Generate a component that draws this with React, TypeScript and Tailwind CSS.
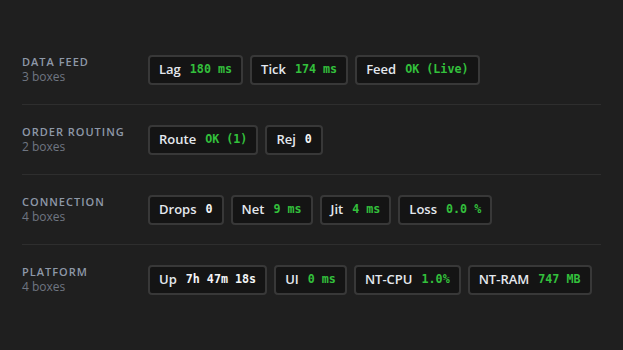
import React from 'react';

type Tone = 'green' | 'white';

interface Metric {
  label: string;
  value: string;
  tone: Tone;
}

interface Group {
  title: string;
  metrics: Metric[];
}

const GROUPS: Group[] = [
  {
    title: 'Data Feed',
    metrics: [
      { label: 'Lag', value: '180 ms', tone: 'green' },
      { label: 'Tick', value: '174 ms', tone: 'green' },
      { label: 'Feed', value: 'OK (Live)', tone: 'green' },
    ],
  },
  {
    title: 'Order Routing',
    metrics: [
      { label: 'Route', value: 'OK (1)', tone: 'green' },
      { label: 'Rej', value: '0', tone: 'white' },
    ],
  },
  {
    title: 'Connection',
    metrics: [
      { label: 'Drops', value: '0', tone: 'white' },
      { label: 'Net', value: '9 ms', tone: 'green' },
      { label: 'Jit', value: '4 ms', tone: 'green' },
      { label: 'Loss', value: '0.0 %', tone: 'green' },
    ],
  },
  {
    title: 'Platform',
    metrics: [
      { label: 'Up', value: '7h 47m 18s', tone: 'white' },
      { label: 'UI', value: '0 ms', tone: 'green' },
      { label: 'NT-CPU', value: '1.0%', tone: 'green' },
      { label: 'NT-RAM', value: '747 MB', tone: 'green' },
    ],
  },
];

const MetricBox: React.FC<{ metric: Metric }> = ({ metric }) => (
  <div className="flex h-[30px] items-center gap-[9px] whitespace-nowrap rounded-[4px] border-2 border-[#383838] bg-[#141414] px-[9px]">
    <span className="text-[13px] font-semibold text-[#e4e8ee]">{metric.label}</span>
    <span
      className={
        'font-["DejaVu_Sans_Mono",monospace] text-[11.7px] font-bold ' +
        (metric.tone === 'green' ? 'text-[#33c03c]' : 'text-[#f3f4f6]')
      }
    >
      {metric.value}
    </span>
  </div>
);

export default function App() {
  return (
    <div className="min-h-[350px] w-full bg-[#1f1f1f] px-[22px] pt-[35px] pb-[35px] font-['Open_Sans','Noto_Sans',sans-serif]">
      {GROUPS.map((group, i) => (
        <div
          key={group.title}
          className={
            'flex items-center pt-[20px] pb-[19px] ' +
            (i < GROUPS.length - 1 ? 'border-b border-[#2e2e2e]' : '')
          }
        >
          <div className="w-[126px] shrink-0">
            <div className="text-[11px] font-semibold uppercase leading-[14px] tracking-[1px] text-[#8e98a8]">
              {group.title}
            </div>
            <div className="text-[12px] leading-[16px] text-[#6f7682]">{group.metrics.length} boxes</div>
          </div>
          <div className="flex gap-[7px]">
            {group.metrics.map(m => (
              <MetricBox key={m.label} metric={m} />
            ))}
          </div>
        </div>
      ))}
    </div>
  );
}
